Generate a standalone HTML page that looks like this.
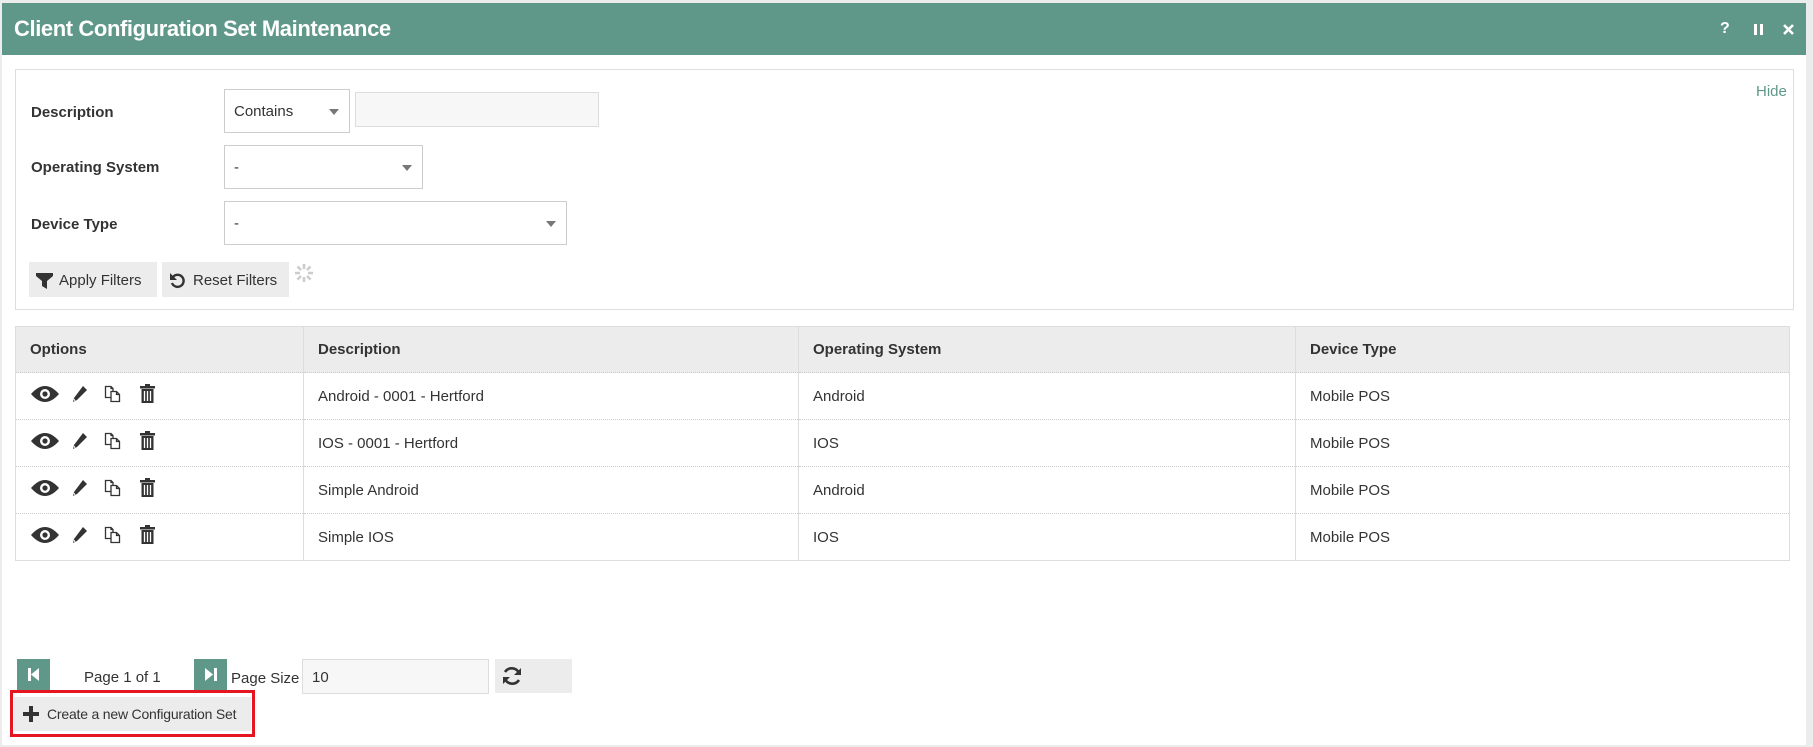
<!DOCTYPE html>
<html><head><meta charset="utf-8">
<style>
*{box-sizing:border-box;margin:0;padding:0}
body{width:1813px;height:747px;background:#ececec;font-family:"Liberation Sans",sans-serif;color:#333;position:relative;overflow:hidden}
.a{position:absolute}
#page{left:2px;top:3px;width:1804px;height:742px;background:#fff}
#hdr{left:2px;top:3px;width:1804px;height:52px;background:#5f9888;color:#fff}
#hdr .t{left:12px;top:13px;font-size:22px;font-weight:bold;letter-spacing:-0.4px}
.hi{color:#fff;font-weight:bold;font-size:16px}
#panel{left:15px;top:69px;width:1779px;height:241px;border:1px solid #ddd;background:#fff}
.lbl{font-size:15px;font-weight:bold;color:#333}
.sel{border:1px solid #ccc;background:#fff;font-size:15px;padding-left:9px;display:flex;align-items:center}
.sel .ar{position:absolute;right:10px;top:50%;margin-top:-2px;border-left:5px solid transparent;border-right:5px solid transparent;border-top:6px solid #777}
.btn{background:#ececec;font-size:15px;display:flex;align-items:center;color:#333}
table{border-collapse:collapse;position:absolute;left:15px;top:326px;width:1775px;font-size:15px}
th{background:#ececec;text-align:left;font-weight:bold;height:46px;padding-left:14px;border-right:1px solid #ddd}
td{height:47px;padding-left:14px;border-right:1px solid #ddd;border-top:1px dotted #ccc}
table{border:1px solid #ddd}
.pg{background:#5f9888;width:33px;height:31px}
</style></head><body>
<div class="a" id="page"></div>
<div class="a" id="hdr"><div class="a t">Client Configuration Set Maintenance</div>
<div class="a hi" style="left:1718px;top:17px">?</div>
<div class="a" style="left:1752px;top:21px;width:3px;height:11px;background:#fff"></div>
<div class="a" style="left:1758px;top:21px;width:3px;height:11px;background:#fff"></div>
<svg class="a" style="left:1780px;top:20px" width="13" height="13" viewBox="0 0 13 13"><path d="M2 2L11 11M11 2L2 11" stroke="#fff" stroke-width="2.6"/></svg>
</div>
<div class="a" id="panel"></div>
<div class="a" style="left:1756px;top:83px;font-size:15px;color:#5f9888">Hide</div>
<div class="a lbl" style="left:31px;top:104px">Description</div>
<div class="a lbl" style="left:31px;top:159px">Operating System</div>
<div class="a lbl" style="left:31px;top:216px">Device Type</div>
<div class="a sel" style="left:224px;top:89px;width:126px;height:44px">Contains<span class="ar"></span></div>
<div class="a" style="left:355px;top:92px;width:244px;height:35px;border:1px solid #ddd;background:#f7f7f7"></div>
<div class="a sel" style="left:224px;top:145px;width:199px;height:44px">-<span class="ar"></span></div>
<div class="a sel" style="left:224px;top:201px;width:343px;height:44px">-<span class="ar"></span></div>
<div class="a btn" style="left:29px;top:262px;width:128px;height:35px;padding-top:2px"><svg style="margin:0 6px 0 7px" width="17" height="17" viewBox="0 0 17 17"><path d="M0 1H17V4L11 9V17L6 14V9L0 4Z" fill="#333"/></svg>Apply Filters</div>
<div class="a btn" style="left:162px;top:262px;width:127px;height:35px;padding-top:2px"><svg style="margin:0 7px 0 7px" width="17" height="17" viewBox="0 0 17 17"><path d="M4 5A6 6 0 1 1 3 11" fill="none" stroke="#333" stroke-width="2.4"/><path d="M1 1V8H8Z" fill="#333"/></svg>Reset Filters</div>
<svg class="a" style="left:294px;top:263px" width="20" height="20" viewBox="0 0 20 20"><g stroke="#ccc" stroke-width="2.5"><path d="M10 1V6M10 14V19M1 10H6M14 10H19M3.5 3.5L7 7M13 13L16.5 16.5M16.5 3.5L13 7M7 13L3.5 16.5"/></g></svg>
<table>
<tr><th style="width:288px">Options</th><th style="width:495px">Description</th><th style="width:497px">Operating System</th><th style="border-right:0">Device Type</th></tr>
<tr><td></td><td>Android - 0001 - Hertford</td><td>Android</td><td>Mobile POS</td></tr>
<tr><td></td><td>IOS - 0001 - Hertford</td><td>IOS</td><td>Mobile POS</td></tr>
<tr><td></td><td>Simple Android</td><td>Android</td><td>Mobile POS</td></tr>
<tr><td></td><td>Simple IOS</td><td>IOS</td><td>Mobile POS</td></tr>
</table>
<div id="icons"></div>
<script>
var ys=[394,441,488,535],h='';
ys.forEach(function(y){
h+='<svg class="a" style="left:30px;top:'+(y-10)+'px" width="30" height="20" viewBox="0 0 30 20"><path d="M1 10Q15 -6 29 10Q15 26 1 10Z" fill="#333"/><circle cx="15" cy="10" r="5" fill="#fff"/><circle cx="15" cy="10" r="2.6" fill="#333"/></svg>';
h+='<svg class="a" style="left:72px;top:'+(y-9)+'px" width="16" height="18" viewBox="0 0 16 18"><path d="M11 1L15 5L5 15L1 17L2 13Z" fill="#333"/><path d="M2 14L3 16" stroke="#fff" stroke-width="1"/></svg>';
h+='<svg class="a" style="left:104px;top:'+(y-9)+'px" width="17" height="18" viewBox="0 0 17 18"><path d="M1.5 1.5H7L9 3.5V12.5H1.5Z M7 1.5V3.5H9" fill="#fff" stroke="#333" stroke-width="1.3"/><path d="M7 6.5H12.5L15.5 9.5V16.5H7Z M12.5 6.5V9.5H15.5" fill="#fff" stroke="#333" stroke-width="1.3"/></svg>';
h+='<svg class="a" style="left:140px;top:'+(y-10)+'px" width="15" height="19" viewBox="0 0 15 19"><rect x="0" y="2" width="15" height="2.5" fill="#333"/><rect x="5" y="0" width="5" height="2" fill="#333"/><path d="M1.5 5H13.5V19H1.5Z" fill="#333"/><path d="M4.5 7V17M7.5 7V17M10.5 7V17" stroke="#fff" stroke-width="1.3"/></svg>';
});
document.getElementById('icons').innerHTML=h;
</script>
<div class="a pg" style="left:17px;top:659px"><svg width="33" height="31" viewBox="0 0 33 31"><rect x="11" y="9" width="3" height="13" fill="#fff"/><path d="M22 9V22L14 15.5Z" fill="#fff"/></svg></div>
<div class="a" style="left:84px;top:669px;font-size:15px">Page 1 of 1</div>
<div class="a pg" style="left:194px;top:659px"><svg width="33" height="31" viewBox="0 0 33 31"><rect x="20" y="9" width="3" height="13" fill="#fff"/><path d="M11 9V22L19 15.5Z" fill="#fff"/></svg></div>
<div class="a" style="left:231px;top:670px;font-size:15px">Page Size</div>
<div class="a" style="left:302px;top:659px;width:187px;height:35px;border:1px solid #ddd;background:#f7f7f7;font-size:15px;padding:9px 0 0 9px">10</div>
<div class="a" style="left:495px;top:659px;width:77px;height:34px;background:#ececec"><svg class="a" style="left:6px;top:6px" width="22" height="22" viewBox="0 0 22 22"><path d="M18 8A8 8 0 0 0 4 7M4 14A8 8 0 0 0 18 15" fill="none" stroke="#333" stroke-width="2.6"/><path d="M20 3V10H13Z M2 19V12H9Z" fill="#333"/></svg></div>
<div class="a" style="left:10px;top:690px;width:245px;height:47px;border:3px solid #e5161f"></div>
<div class="a btn" style="left:14px;top:697px;width:237px;height:34px;font-size:14px;letter-spacing:-0.2px"><svg style="margin:0 8px 0 9px" width="16" height="16" viewBox="0 0 16 16"><path d="M6 0H10V6H16V10H10V16H6V10H0V6H6Z" fill="#333"/></svg>Create a new Configuration Set</div>
</body></html>
